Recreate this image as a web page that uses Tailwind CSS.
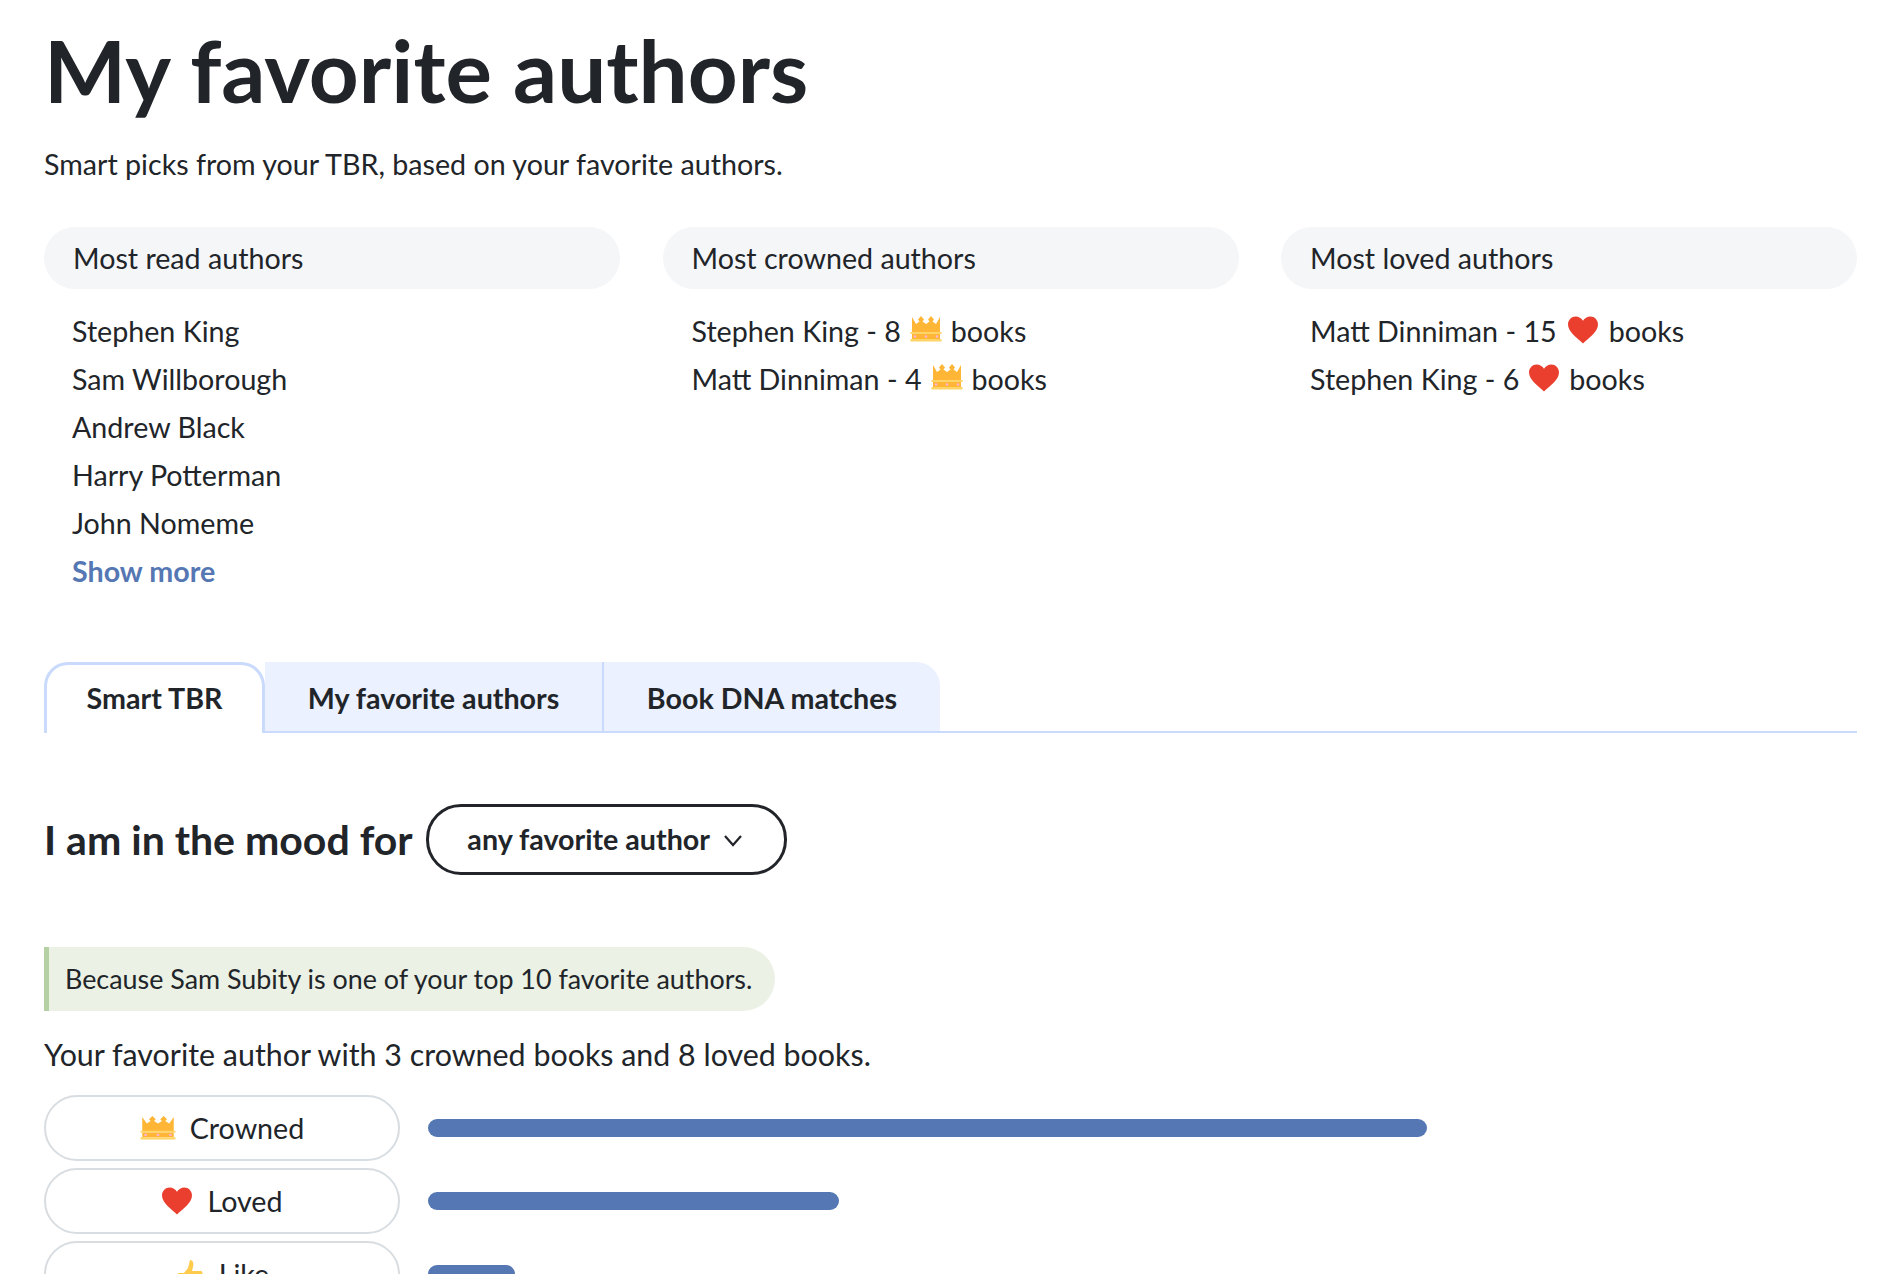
<!doctype html>
<html>
<head>
  <meta charset="UTF-8">
  <meta name="viewport" content="width=device-width, initial-scale=1.0">
  <script src="https://cdn.jsdelivr.net/npm/@tailwindcss/browser@4"></script>
</head>
<body class="h-screen overflow-hidden bg-white text-[#212529] font-['Lato',sans-serif]">
  <svg class="hidden">
    <symbol id="crown" viewBox="0 0 32 26" preserveAspectRatio="none">
      <path fill="#ffb636" d="M2 17V1l4 7 3.500-2.500-1.500-2 3-3.500 3 3.500-1.500 2L16 8l3.500-2.500-1.500-2 3-3.500 3 3.500-1.500 2L26 8l4-7v16z"/>
      <rect x="0.500" y="16" width="31" height="2" fill="#ffd469"/>
      <rect x="2" y="18" width="28" height="5" fill="#ffb636"/>
      <rect x="0.500" y="23" width="31" height="2.500" fill="#ffd469"/>
      <circle cx="5" cy="20.500" r="1.300" fill="#ffb4d2"/>
      <circle cx="16" cy="20.500" r="1.300" fill="#ffb4d2"/>
      <circle cx="27" cy="20.500" r="1.300" fill="#ffb4d2"/>
    </symbol>
    <symbol id="heart" viewBox="0 0 32 28">
      <path fill="#ea3f2e" d="M16 27.500C11 22.500 1 16 1 8.500 1 3.800 4.600.5 8.600.5c3.200 0 5.800 1.600 7.400 4.300C17.600 2.100 20.200.5 23.400.5 27.400.5 31 3.800 31 8.500c0 7.500-10 14-15 19z"/>
    </symbol>
  </svg>

  <main class="pl-[44px] pr-[31px]">
    <h1 class="pt-[22px] text-[87px] leading-[96px] font-bold">My favorite authors</h1>
    <p class="mt-[26px] text-[28.650px] leading-[40px]">Smart picks from your TBR, based on your favorite authors.</p>

    <section class="mt-[43px] grid grid-cols-3 gap-x-[42.500px] text-[28.650px] leading-[48px]">
      <div>
        <h3 class="h-[62px] rounded-[31px] bg-[#f5f6f8] px-[29px] leading-[62px]">Most read authors</h3>
        <ul class="mt-[18px] px-[28px]">
          <li>Stephen King</li>
          <li>Sam Willborough</li>
          <li>Andrew Black</li>
          <li>Harry Potterman</li>
          <li>John Nomeme</li>
          <li class="font-bold text-[#5577b3]">Show more</li>
        </ul>
      </div>
      <div>
        <h3 class="h-[62px] rounded-[31px] bg-[#f5f6f8] px-[29px] leading-[62px]">Most crowned authors</h3>
        <ul class="mt-[18px] px-[29px]">
          <li class="flex items-center gap-[9px]">Stephen King - 8 <svg class="h-[26px] w-[32px] -mt-[4px]"><use href="#crown"/></svg> books</li>
          <li class="flex items-center gap-[9px]">Matt Dinniman - 4 <svg class="h-[26px] w-[32px] -mt-[4px]"><use href="#crown"/></svg> books</li>
        </ul>
      </div>
      <div>
        <h3 class="h-[62px] rounded-[31px] bg-[#f5f6f8] px-[29px] leading-[62px]">Most loved authors</h3>
        <ul class="mt-[18px] px-[29px]">
          <li class="flex items-center gap-[10px]">Matt Dinniman - 15 <svg class="h-[28px] w-[32px] -mt-[3px]"><use href="#heart"/></svg> books</li>
          <li class="flex items-center gap-[9px]">Stephen King - 6 <svg class="h-[28px] w-[32px] -mt-[3px]"><use href="#heart"/></svg> books</li>
        </ul>
      </div>
    </section>

    <nav class="mt-[67px] flex h-[71px] border-b-[2px] border-[#c9dafc] text-[28.650px] font-bold">
      <a class="flex h-[71px] w-[221px] items-center justify-center rounded-t-[24px] border-[3px] border-b-0 border-[#c9dafc] bg-white pb-[2px]">Smart TBR</a>
      <a class="flex h-[69px] w-[339px] items-center justify-center border-r-[2px] border-[#c9dafc] bg-[#ebf1fe] pt-[3px]">My favorite authors</a>
      <a class="flex h-[69px] w-[336px] items-center justify-center rounded-tr-[24px] bg-[#ebf1fe] pt-[3px]">Book DNA matches</a>
    </nav>

    <div class="mt-[71px] flex items-center gap-[13px]">
      <h2 class="text-[41px] leading-[71px] font-bold">I am in the mood for</h2>
      <button class="flex h-[71px] w-[361px] items-center justify-center gap-[11px] rounded-[35px] border-[3px] border-[#212529] text-[28.650px] font-bold">
        any favorite author
        <svg class="h-[24px] w-[24px]" viewBox="0 0 24 24" fill="none" stroke="#212529" stroke-width="2.200"><path d="M4 8l8 9 8-9"/></svg>
      </button>
    </div>

    <p class="mt-[72px] flex h-[64px] w-[731px] items-center rounded-r-[32px] border-l-[5px] border-[#b5d0a3] bg-[#ebf1e5] pl-[16px] text-[26.880px]">Because Sam Subity is one of your top 10 favorite authors.</p>

    <p class="mt-[23px] text-[30.400px] leading-[40px]">Your favorite author with 3 crowned books and 8 loved books.</p>

    <div class="mt-[21px] flex flex-col gap-[7px] text-[28.650px]">
      <div class="flex items-center gap-[28px]">
        <div class="flex h-[66px] w-[356px] items-center justify-center gap-[14px] rounded-[33px] border-[2px] border-[#d8dde1]"><svg class="h-[24px] w-[36px]"><use href="#crown"/></svg>Crowned</div>
        <div class="h-[18px] w-[999px] rounded-[9px] bg-[#5577b3]"></div>
      </div>
      <div class="flex items-center gap-[28px]">
        <div class="flex h-[66px] w-[356px] items-center justify-center gap-[14px] rounded-[33px] border-[2px] border-[#d8dde1]"><svg class="h-[28px] w-[32px]"><use href="#heart"/></svg>Loved</div>
        <div class="h-[18px] w-[411px] rounded-[9px] bg-[#5577b3]"></div>
      </div>
      <div class="flex items-center gap-[28px]">
        <div class="flex h-[66px] w-[356px] items-center justify-center gap-[14px] rounded-[33px] border-[2px] border-[#d8dde1]"><svg class="h-[30px] w-[30px]" viewBox="0 0 30 30"><path fill="#ffcb4c" d="M3 14h6l4-5 2-8c3 0 4 3 3 7l-1 4h9c2 0 2 6 0 7l-1 8H9l-6-2z"/></svg>Like</div>
        <div class="h-[18px] w-[87px] rounded-[9px] bg-[#5577b3]"></div>
      </div>
    </div>
  </main>
</body>
</html>
